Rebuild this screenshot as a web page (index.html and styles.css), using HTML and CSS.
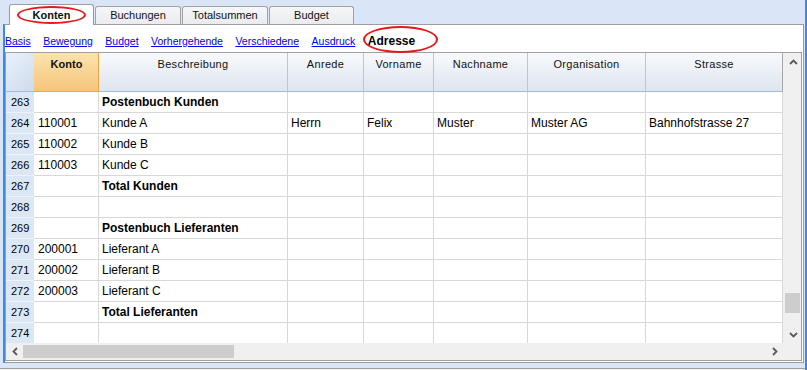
FILE: index.html
```html
<!DOCTYPE html>
<html lang="de">
<head>
<meta charset="utf-8">
<title>Konten - Adresse</title>
<link rel="stylesheet" href="styles.css">
</head>
<body>
<div class="app">
  <div class="tabs">
    <div class="tab tab-active">Konten</div>
    <div class="tab tab-w86">Buchungen</div>
    <div class="tab tab-w86">Totalsummen</div>
    <div class="tab">Budget</div>
    <span class="mark mark-konten"></span>
  </div>
  <div class="panel">
    <div class="subnav">
      <a href="#" class="link">Basis</a>
      <a href="#" class="link">Bewegung</a>
      <a href="#" class="link">Budget</a>
      <a href="#" class="link">Vorhergehende</a>
      <a href="#" class="link">Verschiedene</a>
      <a href="#" class="link">Ausdruck</a>
      <span class="current">Adresse</span>
      <span class="mark mark-adresse"></span>
    </div>
    <div class="grid">
      <div class="table">
        <div class="row head">
          <div class="c corner"></div>
          <div class="c konto-h">Konto</div>
          <div class="c">Beschreibung</div>
          <div class="c">Anrede</div>
          <div class="c">Vorname</div>
          <div class="c">Nachname</div>
          <div class="c">Organisation</div>
          <div class="c">Strasse</div>
        </div>
        <div class="row"><div class="c num">263</div><div class="c"></div><div class="c b">Postenbuch Kunden</div><div class="c"></div><div class="c"></div><div class="c"></div><div class="c"></div><div class="c"></div></div>
        <div class="row"><div class="c num">264</div><div class="c">110001</div><div class="c">Kunde A</div><div class="c">Herrn</div><div class="c">Felix</div><div class="c">Muster</div><div class="c">Muster AG</div><div class="c">Bahnhofstrasse 27</div></div>
        <div class="row"><div class="c num">265</div><div class="c">110002</div><div class="c">Kunde B</div><div class="c"></div><div class="c"></div><div class="c"></div><div class="c"></div><div class="c"></div></div>
        <div class="row"><div class="c num">266</div><div class="c">110003</div><div class="c">Kunde C</div><div class="c"></div><div class="c"></div><div class="c"></div><div class="c"></div><div class="c"></div></div>
        <div class="row"><div class="c num">267</div><div class="c"></div><div class="c b">Total Kunden</div><div class="c"></div><div class="c"></div><div class="c"></div><div class="c"></div><div class="c"></div></div>
        <div class="row"><div class="c num">268</div><div class="c"></div><div class="c"></div><div class="c"></div><div class="c"></div><div class="c"></div><div class="c"></div><div class="c"></div></div>
        <div class="row"><div class="c num">269</div><div class="c"></div><div class="c b">Postenbuch Lieferanten</div><div class="c"></div><div class="c"></div><div class="c"></div><div class="c"></div><div class="c"></div></div>
        <div class="row"><div class="c num">270</div><div class="c">200001</div><div class="c">Lieferant A</div><div class="c"></div><div class="c"></div><div class="c"></div><div class="c"></div><div class="c"></div></div>
        <div class="row"><div class="c num">271</div><div class="c">200002</div><div class="c">Lieferant B</div><div class="c"></div><div class="c"></div><div class="c"></div><div class="c"></div><div class="c"></div></div>
        <div class="row"><div class="c num">272</div><div class="c">200003</div><div class="c">Lieferant C</div><div class="c"></div><div class="c"></div><div class="c"></div><div class="c"></div><div class="c"></div></div>
        <div class="row"><div class="c num">273</div><div class="c"></div><div class="c b">Total Lieferanten</div><div class="c"></div><div class="c"></div><div class="c"></div><div class="c"></div><div class="c"></div></div>
        <div class="row"><div class="c num">274</div><div class="c"></div><div class="c"></div><div class="c"></div><div class="c"></div><div class="c"></div><div class="c"></div><div class="c"></div></div>
      </div>
      <div class="vscroll">
        <div class="arrow"><svg width="9" height="6" viewBox="0 0 9 6"><path d="M1 5 L4.5 1.5 L8 5" fill="none" stroke="#5a5a5a" stroke-width="1.8"/></svg></div>
        <div class="vtrack"><div class="vthumb"></div></div>
        <div class="arrow"><svg width="9" height="6" viewBox="0 0 9 6"><path d="M1 1 L4.5 4.5 L8 1" fill="none" stroke="#5a5a5a" stroke-width="1.8"/></svg></div>
      </div>
      <div class="hscroll">
        <div class="harrow"><svg width="6" height="9" viewBox="0 0 6 9"><path d="M5 1 L1.5 4.5 L5 8" fill="none" stroke="#5a5a5a" stroke-width="1.8"/></svg></div>
        <div class="htrack"><div class="hthumb"></div></div>
        <div class="harrow"><svg width="6" height="9" viewBox="0 0 6 9"><path d="M1 1 L4.5 4.5 L1 8" fill="none" stroke="#5a5a5a" stroke-width="1.8"/></svg></div>
      </div>
      <div class="sq"></div>
    </div>
  </div>
  <div class="bottom"></div>
</div>
</body>
</html>
```

FILE: styles.css
```css
* { box-sizing: border-box; }
html, body { margin: 0; padding: 0; }
body {
  width: 807px;
  height: 370px;
  overflow: hidden;
  background: #dae6f7;
  font-family: "Liberation Sans", Arial, sans-serif;
  color: #000;
}
.app {
  width: 807px;
  height: 370px;
  border-right: 2px solid #3d8ae2;
  display: flex;
  flex-direction: column;
}
.tabs {
  position: relative;
  height: 24px;
  display: flex;
  align-items: flex-end;
  gap: 1px;
  padding-left: 9px;
}
.tab {
  width: 85px;
  height: 18px;
  border: 1px solid #a3a3a3;
  border-bottom: none;
  border-radius: 3px 3px 0 0;
  background: linear-gradient(#f6f7f9, #e9ebef);
  font-size: 11px;
  line-height: 17px;
  text-align: center;
  color: #111;
}
.tab-w86 { width: 86px; }
.tab-active {
  background: #fff;
  font-weight: bold;
  line-height: 20px;
  margin-bottom: -1px;
  height: 21px;
  position: relative;
  z-index: 1;
  border-color: #9c9c9c;
}
.mark {
  position: absolute;
  border: 2px solid #e3191e;
  border-radius: 50%;
  z-index: 3;
  pointer-events: none;
}
.mark-konten { left: 17px; top: 6px; width: 69px; height: 18px; }
.mark-adresse { left: 358px; top: 1px; width: 75px; height: 27px; }
.panel {
  margin-left: 3px;
  width: 801px;
  height: 339px;
  background: #fff;
  border-top: 1px solid #9c9c9c;
  border-right: 1px solid #9c9c9c;
  border-bottom: 1px solid #9c9c9c;
  border-left: 2px solid #3d8ae2;
  padding-bottom: 1px;
  display: flex;
  flex-direction: column;
}
.subnav {
  position: relative;
  height: 27px;
  display: flex;
  align-items: flex-start;
  gap: 12.5px;
  padding-top: 9px;
  font-size: 10.5px;
  line-height: 14px;
}
.link { color: #0000f0; text-decoration: underline; }
.current { font-weight: bold; font-size: 12px; color: #000; }
.grid {
  width: 797px;
  height: 309px;
  border: 1px solid #a0a0a0;
  display: grid;
  grid-template-columns: 777px 18px;
  grid-template-rows: 290px 17px;
}
.table { overflow: hidden; }
.row {
  display: grid;
  grid-template-columns: 28px 65px 189px 76px 70px 94px 118px 137px;
  height: 21px;
}
.c {
  border-right: 1px solid #d8d8d8;
  border-bottom: 1px solid #d8d8d8;
  font-size: 12px;
  line-height: 20px;
  padding: 0 3px;
  white-space: nowrap;
  overflow: hidden;
}
.c:nth-child(2) { padding-left: 4px; }
.b { font-weight: bold; }
.num {
  background: #dce7f5;
  border-right: none;
  border-bottom-color: #eef3fa;
  font-size: 11px;
  padding-left: 5px;
}
.head { height: 39px; }
.head .c {
  background: linear-gradient(#f8fafd, #dee5ef);
  border-right-color: #b6c7dd;
  border-bottom-color: #a3b9d6;
  font-size: 11px;
  line-height: 13px;
  padding-top: 5px;
  text-align: center;
  letter-spacing: 0.3px;
  color: #111;
}
.head .c:last-child { border-right-color: #a8a8a8; }
.head .corner {
  background: linear-gradient(135deg, #eaf1fa, #cddbee);
  border-right: none;
}
.head .konto-h {
  background: linear-gradient(#fce3ae, #f6c57a);
  border-right-color: #f0a446;
  border-bottom-color: #f0a446;
  font-weight: bold;
  letter-spacing: 0;
}
.vscroll {
  grid-row: 1;
  grid-column: 2;
  background: #f0f0f0;
  display: flex;
  flex-direction: column;
}
.arrow {
  height: 17px;
  display: flex;
  align-items: center;
  justify-content: center;
  padding-left: 2px;
}
.vtrack { flex: 1; padding-left: 2px; }
.vthumb {
  margin-top: 223px;
  width: 15px;
  height: 20px;
  background: #cdcdcd;
}
.hscroll {
  grid-row: 2;
  grid-column: 1;
  background: #f0f0f0;
  display: flex;
  align-items: center;
}
.harrow {
  width: 17px;
  height: 17px;
  display: flex;
  align-items: center;
  justify-content: center;
}
.htrack { flex: 1; height: 17px; display: flex; align-items: center; }
.hthumb {
  width: 211px;
  height: 13px;
  background: #cdcdcd;
}
.sq { grid-row: 2; grid-column: 2; background: #f0f0f0; }
.bottom {
  margin-top: 5px;
  height: 2px;
  border-top: 1px solid #a0a0a0;
  background: #f0f0f0;
}
```
